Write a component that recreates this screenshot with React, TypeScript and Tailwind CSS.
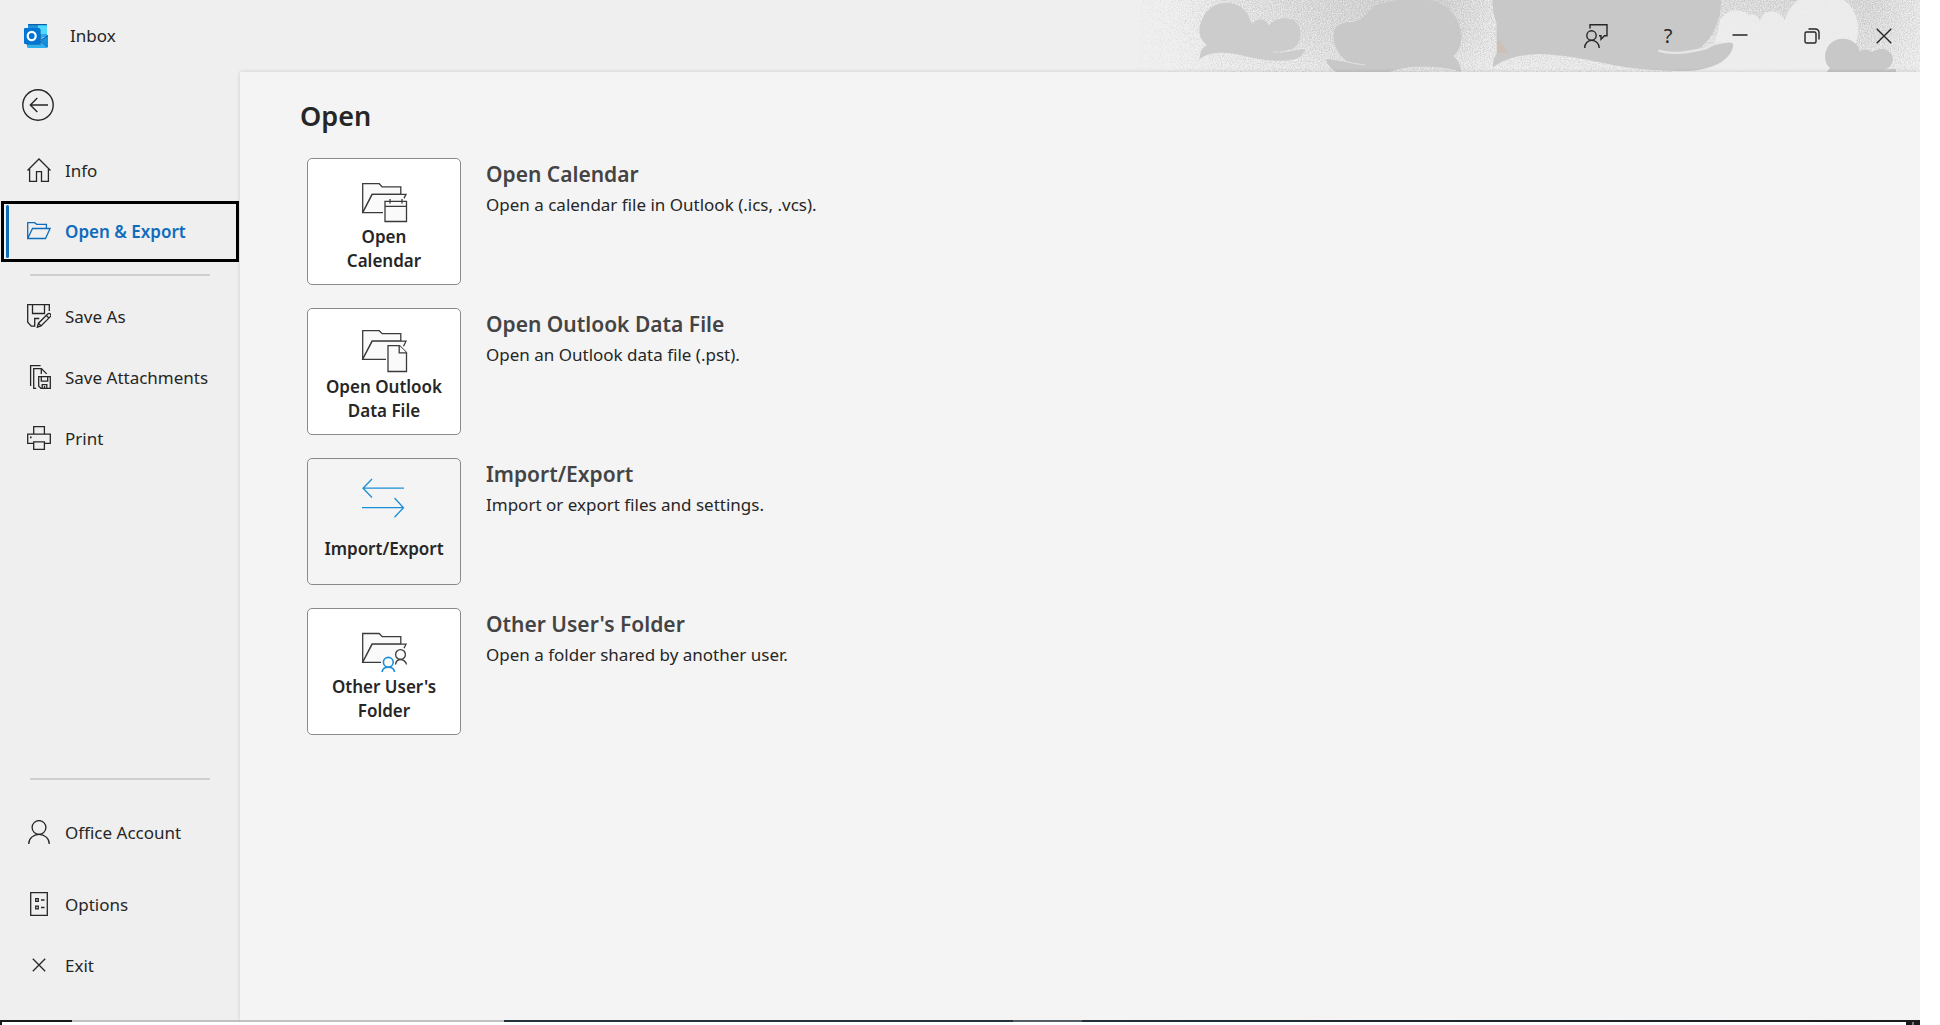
import type { ReactNode } from "react";

const OutlookLogo = () => (
  <svg className="w-6 h-6" viewBox="0 0 24 24" aria-hidden="true">
    <path d="M5 0h17a1 1 0 0 1 1 1v12H4V1a1 1 0 0 1 1-1z" fill="#28a8ea" />
    <path d="M14 1h9v9h-9z" fill="#50d9ff" />
    <path d="M4 1h10v9H4z" fill="#1c94dd" />
    <path d="M4 1.200a1 1 0 0 1 1-1.200h17a1 1 0 0 1 1 1.200z" fill="#0a5fa8" />
    <path d="M14 10h9l-7 6z" fill="#28a8ea" />
    <path d="M24 11v11a2 2 0 0 1-2 2H5a2 2 0 0 1-2-2v-4l13-1z" fill="#1490df" />
    <path d="M3 20l13-3 7 7H5a2 2 0 0 1-2-2z" fill="#2eb1ee" />
    <path d="M16 16l8-5v1l-7 4.600z" fill="#0f5fa6" />
    <path d="M16 17l8 6" stroke="#1068b5" strokeWidth="0.600" />
    <rect x="2" y="5" width="15" height="16" rx="1" fill="#0a4f8f" opacity="0.500" />
    <rect x="0" y="4" width="16" height="16" rx="1" fill="#0075d6" />
    <ellipse cx="7.700" cy="12" rx="4" ry="4.200" fill="none" stroke="#fff" strokeWidth="2.200" />
  </svg>
);

// 24px outline icons used by the side menu
const Icon = ({ children }: { children: ReactNode }) => (
  <svg
    className="w-6 h-6 mb-px shrink-0"
    viewBox="0 0 24 24"
    fill="none"
    stroke="currentColor"
    strokeWidth={1.3}
    aria-hidden="true"
  >
    {children}
  </svg>
);

const HomeIcon = () => (
  <Icon>
    <path d="M0.500 12.500L12 1l11.500 11.500M2.600 11v12.300H9.500V13.600h5v9.700h6.900V11" />
  </Icon>
);

const FolderIcon = () => (
  <Icon>
    <path d="M0.700 19.500V3.700h7l2 1.600h9.700v4.200M0.700 19.500L5.500 9.500h17.600l-4.600 10z" />
  </Icon>
);

const SaveAsIcon = () => (
  <Icon>
    <path d="M22.300 7V0.700H0.700v17.500l3.600 4h3.400v-7.700h4.600M5.500 0.700v8.800h12V0.700" />
    <path d="M10.300 23.200l1.200-4L20.700 10a1.800 1.800 0 0 1 2.600 2.600L14 21.900zM19.300 11.400l2.600 2.600M11.500 19.200l2.500 2.700" />
  </Icon>
);

const SaveAttachmentsIcon = () => (
  <Icon>
    <path d="M3.600 21V0.700h10M9.200 23.300H6.700V3.600h7.700l5.300 5.300M14.300 3.600v5.300" />
    <path d="M11.700 11.600h11.600v11.700h-9.500l-2.100-2.200zM14.300 11.600v4.500h6.400v-4.500M15.200 23.300v-3.600h4.600v3.600M17.500 21v2" />
  </Icon>
);

const PrintIcon = () => (
  <Icon>
    <path d="M6.700 8.200V0.700h10.700v7.500M6.700 17.400H0.700V8.200h22.600v9.200h-5.900M6.700 15.900h10.700v7.400H6.700z" />
    <path d="M3 11.400h1.600" strokeWidth={1.800} />
  </Icon>
);

const AccountIcon = () => (
  <Icon>
    <circle cx="12" cy="7.500" r="6.900" />
    <path d="M1.700 24c0-5.500 4.600-9.600 10.300-9.600s10.300 4.100 10.300 9.600" />
  </Icon>
);

const OptionsIcon = () => (
  <Icon>
    <path d="M3.700 0.700h16.600v22.600H3.700z" />
    <path d="M8.700 6.700h2.600v2.600H8.700zM8.700 14.200h2.600v2.600H8.700zM14 8h3.500M14 15.500h3.500" />
  </Icon>
);

const ExitIcon = () => (
  <Icon>
    <path d="M5.800 5.800l12.400 12.400M18.200 5.800L5.800 18.200" />
  </Icon>
);

// 44px icons on the large buttons
const TileIcon = ({ children }: { children: ReactNode }) => (
  <svg
    className="w-11 h-[45px] shrink-0 overflow-visible"
    viewBox="0 0 44 45"
    fill="#fafafa"
    stroke="#3b3b3b"
    strokeWidth={1.3}
    aria-hidden="true"
  >
    {children}
  </svg>
);

const CalendarTileIcon = () => (
  <TileIcon>
    <path d="M0.700 32.700V3.700h16.500l3 3.200h18.600v7.500H10z" />
    <path d="M21 32.700H0.700L10.200 14.400H44l-2 4" />
    <path d="M23 21.300h21.500v20.200H23z" />
    <path d="M23 26.300h21.500M28 19v4.500M40 19v4.500" />
  </TileIcon>
);

const DataFileTileIcon = () => (
  <TileIcon>
    <path d="M0.700 29.300V0.700h16.500l3 3h18.600v7.500H10z" />
    <path d="M24 29.300H0.700l9.500-18.100H44l-2.500 5" />
    <path d="M26 15.600h11.500l7 7v18.900H26z" />
    <path d="M37.200 15.600v7.200h7.300" />
  </TileIcon>
);

const ImportExportTileIcon = () => (
  <TileIcon>
    <path d="M10-1L1 8.200l9 9.300M1 8.200h41M32.500 18l9 9.700-9 9.500M41.500 27.700H0" fill="none" stroke="#1a8fd8" />
  </TileIcon>
);

const SharedFolderTileIcon = () => (
  <TileIcon>
    <path d="M0.700 32.300V3.500h16.500l3 3.200h18.600v7.500H10z" />
    <path d="M19 32.300H0.700l9.500-18.100H44l-2 4" />
    <path d="M26 26h7l2-7h9v8l-8 8H22z" stroke="none" />
    <circle cx="38.500" cy="24.500" r="4.900" />
    <path d="M33.500 34.500c.5-3 2.500-5 5-5s5.500 2 6 5" fill="none" />
    <g stroke="#1a8fd8" strokeWidth={1.600}>
      <circle cx="26.300" cy="32.300" r="4.900" />
      <path d="M20 42c.5-3 3.300-4.700 6.300-4.700s5.800 1.700 6.300 4.700" fill="none" />
    </g>
  </TileIcon>
);

// Grainy cloud artwork behind the window buttons
const CloudArt = () => (
  <svg
    className="absolute right-0 top-0 w-[780px] h-[72px]"
    viewBox="0 0 2340 216"
    aria-hidden="true"
  >
    <defs>
      <filter id="grain" x="0" y="0" width="100%" height="100%" colorInterpolationFilters="sRGB">
        <feTurbulence type="fractalNoise" baseFrequency="0.3" numOctaves="2" seed="4" />
        <feColorMatrix values="0 0 0 0 0  0 0 0 0 0  0 0 0 0 0  2.4 0 0 0 -0.7" result="noise" />
        <feComposite in="SourceGraphic" in2="noise" operator="arithmetic" k2="1.2" k3="0.8" k4="-0.6" />
        <feColorMatrix values="0 0 0 0 0.784  0 0 0 0 0.784  0 0 0 0 0.784  0 0 0 1 0" />
      </filter>
      <linearGradient id="spray" x1="0" x2="1" y1="0" y2="0">
        <stop offset="0" stopOpacity="0" />
        <stop offset="0.040" stopOpacity="0.140" />
        <stop offset="0.100" stopOpacity="0.440" />
        <stop offset="0.200" stopOpacity="0.640" />
        <stop offset="0.280" stopOpacity="0.800" />
        <stop offset="0.380" stopOpacity="0.900" />
        <stop offset="0.450" stopOpacity="0.500" />
        <stop offset="0.700" stopOpacity="0.600" />
        <stop offset="0.800" stopOpacity="0.660" />
        <stop offset="0.940" stopOpacity="0.700" />
        <stop offset="1" stopOpacity="0.400" />
      </linearGradient>
      <linearGradient id="fall" x1="0" x2="0" y1="0" y2="1">
        <stop offset="0" stopColor="#fff" />
        <stop offset="0.500" stopColor="#ddd" />
        <stop offset="1" stopColor="#888" />
      </linearGradient>
      <mask id="fade">
        <rect width="2340" height="216" fill="url(#fall)" />
      </mask>
    </defs>
    <g filter="url(#grain)">
      <rect width="2340" height="216" fill="url(#spray)" mask="url(#fade)" />
    </g>
    <path
      d="M178 178C180 155 188 142 202 136C180 120 176 95 180 78C190 30 225 8 258 8C300 8 328 36 335 74C350 52 372 54 387 76C405 52 450 48 468 66C490 90 486 130 455 148C430 156 410 155 395 156C420 162 460 150 495 146C498 150 490 168 465 177C420 188 370 180 330 172C270 158 220 148 178 178Z"
      fill="#cccccc"
    />
    <path
      d="M558 178C575 176 600 184 622 186C590 160 580 130 580 105C582 80 600 66 640 66C665 62 680 40 700 20C740 0 820-8 885 4C940 25 965 70 965 110C963 135 955 155 940 168C955 180 963 195 963 216C920 200 880 200 820 200C790 203 770 208 748 216H588C570 205 560 190 558 178Z"
      fill="#c8c8c8"
    />
    <path d="M610 182q30 10 65 13" stroke="#e2e2e2" strokeWidth="3" fill="none" />
    <path
      d="M1740 60C1760 30 1800 20 1825 45C1840 40 1855 48 1860 62C1870 30 1915 20 1935 62C1945 20 1980-20 2045-20C2115-20 2155 30 2155 90C2150 150 2120 190 2080 216H1600C1680 200 1730 150 1740 60Z"
      fill="#efefef"
      opacity="0.850"
    />
    <path
      d="M1058 0C1058 30 1062 50 1070 70V160C1062 170 1058 185 1059 202C1090 178 1140 163 1200 162C1300 165 1380 190 1460 202C1530 212 1600 214 1660 212C1720 205 1775 180 1780 134C1778 126 1768 126 1750 130L1680 144C1725 110 1743 50 1743 0Z"
      fill="#c8c8c8"
    />
    <path d="M1555 152C1600 166 1650 156 1700 144C1715 134 1730 128 1745 128" stroke="#e6e6e6" strokeWidth="7" fill="none" />
    <path d="M1072 112l36 48h-36z" fill="#cdc0b9" />
    <path
      d="M2060 216L2070 204C2050 190 2050 150 2072 130C2100 105 2150 115 2160 155C2168 146 2188 146 2194 158C2215 140 2250 145 2258 170C2260 190 2252 202 2235 208L2268 207V216Z"
      fill="#c8c8c8"
    />
  </svg>
);

const WindowButton = ({ label, children }: { label: string; children: ReactNode }) => (
  <button
    type="button"
    aria-label={label}
    className="w-[72px] h-[72px] flex items-center justify-center text-xl text-[#262626] hover:bg-black/5"
  >
    {children}
  </button>
);

const NavItem = ({ label, icon, active }: { label: string; icon: ReactNode; active?: boolean }) => (
  <a
    href="#"
    className={`mx-px h-[61px] pl-[2px] border-[3px] flex items-center whitespace-nowrap ${
      active ? "border-black text-[#0f6cbd] font-semibold" : "border-transparent text-[#262626]"
    }`}
  >
    <span className={`w-[3px] h-[53px] rounded-full mr-[18px] ${active ? "bg-[#0f6cbd]" : ""}`} />
    {icon}
    <span className="ml-[14px]">{label}</span>
  </a>
);

const actions = [
  {
    title: "Open Calendar",
    text: "Open a calendar file in Outlook (.ics, .vcs).",
    button: ["Open", "Calendar"],
    icon: <CalendarTileIcon />,
  },
  {
    title: "Open Outlook Data File",
    text: "Open an Outlook data file (.pst).",
    button: ["Open Outlook", "Data File"],
    icon: <DataFileTileIcon />,
  },
  {
    title: "Import/Export",
    text: "Import or export files and settings.",
    button: ["Import/Export"],
    icon: <ImportExportTileIcon />,
    plain: true,
  },
  {
    title: "Other User's Folder",
    text: "Open a folder shared by another user.",
    button: ["Other User's", "Folder"],
    icon: <SharedFolderTileIcon />,
  },
];

export default function App() {
  return (
    <div className="min-h-screen pr-5 bg-white flex flex-col font-['Noto_Sans','Open_Sans',sans-serif] text-[17px] leading-6 text-[#262626]">
      <div className="flex-1 flex flex-col bg-[#efefef] overflow-hidden">
        <header className="relative h-[72px] shrink-0 flex items-center justify-between pl-6">
          <CloudArt />
          <div className="flex items-center gap-[22px]">
            <OutlookLogo />
            <span>Inbox</span>
          </div>
          <div className="relative flex">
            <WindowButton label="Feedback">
              <svg className="w-6 h-6" viewBox="0 0 24 24" fill="none" stroke="currentColor" strokeWidth={1.400}>
                <path d="M6 4.500V0.700h17v11h-2.500L17 15.300v-3.600h-2" />
                <circle cx="7.500" cy="11.500" r="4.700" />
                <path d="M0.700 24c0-4.500 3-7.600 7-7.600s7.500 3.100 7.500 7.600" />
              </svg>
            </WindowButton>
            <WindowButton label="Help">?</WindowButton>
            <WindowButton label="Minimize">
              <svg className="w-4 h-4" viewBox="0 0 16 16" stroke="currentColor" strokeWidth={1.500}>
                <path d="M0.500 7h15" />
              </svg>
            </WindowButton>
            <WindowButton label="Restore">
              <svg className="w-4 h-4" viewBox="0 0 16 16" fill="none" stroke="currentColor" strokeWidth={1.400}>
                <rect x="1" y="4" width="11" height="11" rx="1.500" />
                <path d="M4.500 1h7A3.500 3.500 0 0 1 15 4.500v7" />
              </svg>
            </WindowButton>
            <WindowButton label="Close">
              <svg className="w-4 h-4" viewBox="0 0 16 16" stroke="currentColor" strokeWidth={1.400}>
                <path d="M0.700 0.700l14.600 14.600M15.300 0.700L0.700 15.300" />
              </svg>
            </WindowButton>
          </div>
        </header>

        <div className="flex-1 flex">
          {/* Side menu */}
          <nav className="w-60 shrink-0 flex flex-col pb-6">
            <button type="button" aria-label="Back" className="w-8 h-8 ml-[22px] mt-[17px] mb-[19px]">
              <svg viewBox="0 0 32 32" fill="none" stroke="#262626" strokeWidth={1.400}>
                <circle cx="16" cy="16" r="15.200" />
                <path d="M26 16H8M15.300 9L8.300 16l7 7" />
              </svg>
            </button>
            <NavItem label="Info" icon={<HomeIcon />} />
            <NavItem label="Open & Export" icon={<FolderIcon />} active />
            <hr className="h-[2px] border-0 bg-[#cfcfcf] mx-[30px] mt-3 mb-[10px]" />
            <NavItem label="Save As" icon={<SaveAsIcon />} />
            <NavItem label="Save Attachments" icon={<SaveAttachmentsIcon />} />
            <NavItem label="Print" icon={<PrintIcon />} />
            <div className="flex-1" />
            <hr className="h-[2px] border-0 bg-[#cfcfcf] mx-[30px] mb-[22px]" />
            <NavItem label="Office Account" icon={<AccountIcon />} />
            <div className="h-[11px]" />
            <NavItem label="Options" icon={<OptionsIcon />} />
            <NavItem label="Exit" icon={<ExitIcon />} />
          </nav>

          {/* Content */}
          <main className="relative flex-1 bg-[#f4f4f4] shadow-[0_0_4px_rgba(0,0,0,0.15)] pl-[60px] pt-6">
            <h1 className="text-[27px] leading-10 font-semibold">Open</h1>
            <ul className="mt-[22px] ml-[7px] flex flex-col gap-[23px]">
              {actions.map((action) => (
                <li key={action.title} className="flex gap-[25px]">
                  <button
                    type="button"
                    className={`w-[154px] h-[127px] pt-[21px] shrink-0 flex flex-col items-center border border-[#8a8a8a] rounded-[5px] font-semibold ${
                      action.plain ? "bg-[#f4f4f4]" : "bg-white"
                    }`}
                  >
                    {action.icon}
                    <span className="h-12 flex flex-col justify-center">
                      {action.button.map((line) => (
                        <span key={line}>{line}</span>
                      ))}
                    </span>
                  </button>
                  <div>
                    <h2 className="text-[21px] leading-8 font-semibold text-[#444]">{action.title}</h2>
                    <p className="mt-[3px]">{action.text}</p>
                  </div>
                </li>
              ))}
            </ul>
          </main>
        </div>
      </div>

      {/* Sliver of the taskbar under the window */}
      <div className="flex h-[2px]">
        <div className="w-[72px] bg-[#1a1a1a]" />
        <div className="w-[432px] bg-[#c0c0c0]" />
        <div className="w-[509px] bg-[#24323c]" />
        <div className="w-[69px] bg-[#555d63]" />
        <div className="flex-1 bg-linear-to-r from-[#22303a] to-[#1b1b1b]" />
      </div>
      <div className="flex h-[3px]">
        <div className="w-[2px] bg-[#1a1a1a]" />
        <div className="flex-1" />
        <div className="w-[6px] bg-[#1b1b1b]" />
        <div className="w-[2px] bg-[#777]" />
        <div className="w-[6px] bg-[#1b1b1b]" />
      </div>
    </div>
  );
}
